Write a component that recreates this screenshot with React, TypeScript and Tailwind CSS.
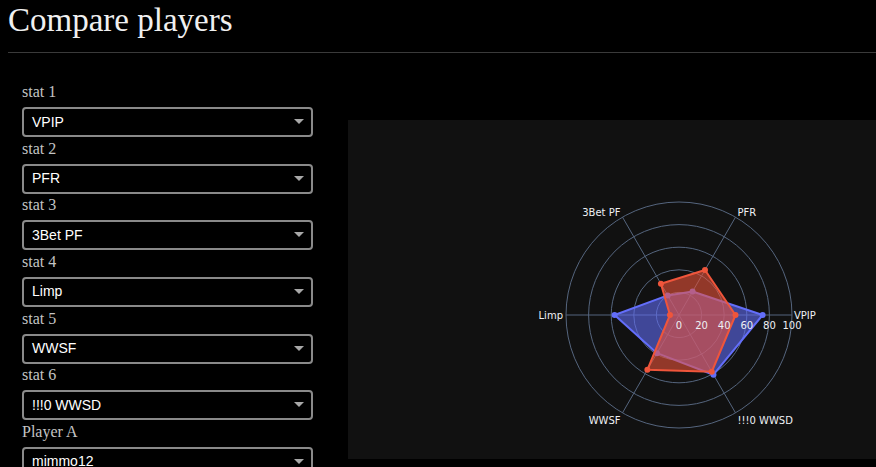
import React from "react";

const CX = 331;
const CY = 195;
const R = 113;
const ANG = [0, 60, 120, 180, 240, 300];

function pt(v: number, i: number): [number, number] {
  const a = (ANG[i] * Math.PI) / 180;
  const r = (v / 100) * R;
  return [CX + r * Math.cos(a), CY - r * Math.sin(a)];
}

const blue = [74, 24, 20, 57, 39, 61];
const red = [50, 46, 32, 8, 56, 58];

function Trace({ vals, color }: { vals: number[]; color: string }) {
  const pts = vals.map((v, i) => pt(v, i));
  const s = pts.map((p) => p.join(",")).join(" ");
  return (
    <g>
      <polygon points={s} fill={color} fillOpacity={0.58} stroke={color} strokeWidth={2} strokeLinejoin="round" />
      {pts.map((p, i) => (
        <circle key={i} cx={p[0]} cy={p[1]} r={3} fill={color} />
      ))}
    </g>
  );
}

const lbl = "fill-[#eef0f4] text-[10px] font-['DejaVu_Sans',Verdana,sans-serif]";

function Chart() {
  const grid = "#55657e";
  return (
    <svg width="528" height="339" viewBox="0 0 528 339">
      {[20, 40, 60, 80, 100].map((v) => (
        <circle key={v} cx={CX} cy={CY} r={(v / 100) * R} fill="none" stroke={grid} strokeWidth={1} />
      ))}
      {ANG.map((_, i) => {
        const [x, y] = pt(100, i);
        return <line key={i} x1={CX} y1={CY} x2={x} y2={y} stroke={grid} strokeWidth={1} />;
      })}
      <Trace vals={blue} color="#636efa" />
      <Trace vals={red} color="#ef553b" />
      {[0, 20, 40, 60, 80, 100].map((v) => (
        <text key={v} x={CX + (v / 100) * R} y={CY + 14} textAnchor="middle" className={lbl}>
          {v}
        </text>
      ))}
      <text x={CX + R + 2} y={CY + 3.5} className={lbl}>VPIP</text>
      <text x={CX + R * 0.5 + 2} y={CY - R * 0.866 - 1} className={lbl}>PFR</text>
      <text x={CX - R * 0.5 - 2} y={CY - R * 0.866 - 1} textAnchor="end" className={lbl}>3Bet PF</text>
      <text x={CX - R - 3} y={CY + 3.5} textAnchor="end" className={lbl}>Limp</text>
      <text x={CX - R * 0.5 - 2} y={CY + R * 0.866 + 11} textAnchor="end" className={lbl}>WWSF</text>
      <text x={CX + R * 0.5 + 2} y={CY + R * 0.866 + 11} className={lbl}>!!!0 WWSD</text>
    </svg>
  );
}

function Field({ label, value }: { label: string; value: string }) {
  return (
    <div className="h-[56.67px] shrink-0">
      <div className="h-[22px] text-[16px] leading-[22px] text-[#c4c4c4] font-['Liberation_Serif',serif]">{label}</div>
      <div className="mt-[4px] flex h-[30px] items-center justify-between rounded-[4px] border-2 border-[#8a8a8a] bg-black pl-[8px] pr-[7px]">
        <span className="text-[14px] text-white font-['Liberation_Sans',Arial,sans-serif]">{value}</span>
        <svg width="10" height="6" viewBox="0 0 10 6">
          <polygon points="0,0 10,0 5,5" fill="#a8a8a8" />
        </svg>
      </div>
    </div>
  );
}

export default function App() {
  const fields: [string, string][] = [
    ["stat 1", "VPIP"],
    ["stat 2", "PFR"],
    ["stat 3", "3Bet PF"],
    ["stat 4", "Limp"],
    ["stat 5", "WWSF"],
    ["stat 6", "!!!0 WWSD"],
    ["Player A", "mimmo12"],
  ];
  return (
    <div className="h-[467px] overflow-hidden bg-black text-white">
      <h1 className="pl-2 text-[33px] leading-[40px] text-[#f0f0f0] font-['Liberation_Serif',serif]">Compare players</h1>
      <hr className="ml-2 mt-3 border-t border-[#3a3a3a]" />
      <div className="flex">
        <div className="ml-[22px] flex w-[291px] shrink-0 flex-col pt-[28px]">
          {fields.map(([l, v]) => (
            <Field key={l} label={l} value={v} />
          ))}
        </div>
        <div className="ml-[35px] mt-[67px] h-[339px] w-[528px] shrink-0 bg-[#111111]">
          <Chart />
        </div>
      </div>
    </div>
  );
}
